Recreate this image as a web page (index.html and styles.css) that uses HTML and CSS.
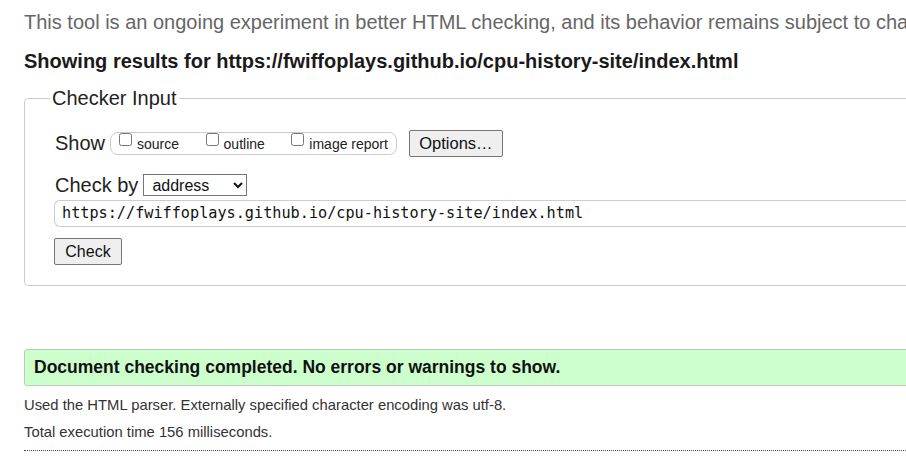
FILE: index.html
```html
<!DOCTYPE html>
<html>
<head>
<meta charset="utf-8">
<link rel="stylesheet" href="styles.css">
<title>Nu Html Checker</title>
</head>
<body>
<div class="page">
  <p class="intro">This tool is an ongoing experiment in better HTML checking, and its behavior remains subject to change.</p>
  <h2 class="results">Showing results for https://fwiffoplays.github.io/cpu-history-site/index.html</h2>
  <fieldset class="checker">
    <legend>Checker Input</legend>
    <div class="row show-row">
      <span class="row-label">Show</span>
      <span class="opts">
        <label class="opt"><input type="checkbox">source</label>
        <label class="opt"><input type="checkbox">outline</label>
        <label class="opt"><input type="checkbox">image report</label>
      </span>
      <button class="btn options">Options…</button>
    </div>
    <div class="row by-row">
      <span class="row-label">Check by</span>
      <select class="sel"><option>address</option><option>file upload</option><option>text input</option></select>
    </div>
    <div class="urlbox">https://fwiffoplays.github.io/cpu-history-site/index.html</div>
    <button class="btn check">Check</button>
  </fieldset>
  <div class="success">Document checking completed. No errors or warnings to show.</div>
  <p class="meta">Used the HTML parser. Externally specified character encoding was utf-8.</p>
  <p class="meta">Total execution time 156 milliseconds.</p>
  <hr class="dots">
</div>
</body>
</html>
```
FILE: styles.css
```css
html, body {
  margin: 0;
  padding: 0;
  overflow: hidden;
  background: #fff;
}
body {
  font-family: "Liberation Sans", Arial, sans-serif;
  color: #111;
}
.page {
  width: 1300px;
  padding-left: 24px;
}
.intro {
  margin: 0;
  padding-top: 10px;
  font-size: 20px;
  line-height: 24px;
  color: #666;
  white-space: nowrap;
}
.results {
  margin: 15px 0 0 0;
  font-size: 20px;
  line-height: 24px;
  font-weight: bold;
  color: #1a1a1a;
  white-space: nowrap;
}
.checker {
  margin: 13px 0 0 0;
  padding: 19px 0 20px 29px;
  border: 1px solid #ccc;
  border-radius: 4px;
}
.checker legend {
  font-size: 20px;
  line-height: 24px;
  color: #222;
  padding: 0 2px;
  margin-left: -4px;
}
.row {
  display: flex;
  align-items: center;
}
.row-label {
  font-size: 20px;
  color: #222;
  margin-left: 1px;
  margin-right: 5px;
}
.show-row {
  height: 28px;
}
.opts {
  display: inline-flex;
  align-items: center;
  height: 23px;
  border: 1px solid #ccc;
  border-radius: 8px;
  padding: 0 8px 0 6px;
  box-sizing: border-box;
  margin-right: 12px;
}
.opt {
  font-size: 14px;
  color: #222;
  display: inline-flex;
  align-items: baseline;
  margin-right: 24.5px;
  position: relative;
  top: 1px;
}
.opt:last-child {
  margin-right: 0;
}
.opt input {
  margin: 0 5px 0 2px;
  width: 13px;
  height: 13px;
  position: relative;
  top: -3px;
}
.btn {
  font-family: "Liberation Sans", Arial, sans-serif;
  font-size: 16px;
  color: #111;
  background: #efefef;
  border: 1px solid #767676;
  border-radius: 2px;
  padding: 0 9px;
  height: 27px;
}
.options {
  width: 94px;
  font-size: 16.5px;
}
.by-row {
  margin-top: 17px;
  height: 22px;
}
.sel {
  font-family: "Liberation Sans", Arial, sans-serif;
  font-size: 16px;
  color: #111;
  width: 104px;
  height: 22px;
  border: 1px solid #767676;
  border-radius: 0;
  padding: 0 0 0 4px;
  background: #fff;
}
.urlbox {
  margin-top: 4px;
  height: 27px;
  box-sizing: border-box;
  border: 1px solid #ccc;
  border-right: none;
  border-radius: 6px 0 0 6px;
  font-family: "DejaVu Sans Mono", "Liberation Mono", monospace;
  font-size: 15.2px;
  line-height: 25px;
  padding-left: 7px;
  color: #111;
}
.check {
  margin-top: 11px;
  width: 68px;
  height: 27px;
  padding: 0;
}
.success {
  margin-top: 63px;
  height: 37px;
  box-sizing: border-box;
  background: #ccffcc;
  border: 1px solid #bbc9bb;
  border-radius: 3px;
  font-size: 17.5px;
  font-weight: bold;
  line-height: 35px;
  padding-left: 9px;
  color: #111;
}
.meta {
  margin: 11px 0 0 0;
  font-size: 14.8px;
  line-height: 16px;
  color: #333;
}
.meta + .meta {
  margin-top: 11px;
}
.dots {
  margin: 10px 0 0 0;
  border: none;
  border-top: 1px dotted #555;
  height: 0;
}
```
